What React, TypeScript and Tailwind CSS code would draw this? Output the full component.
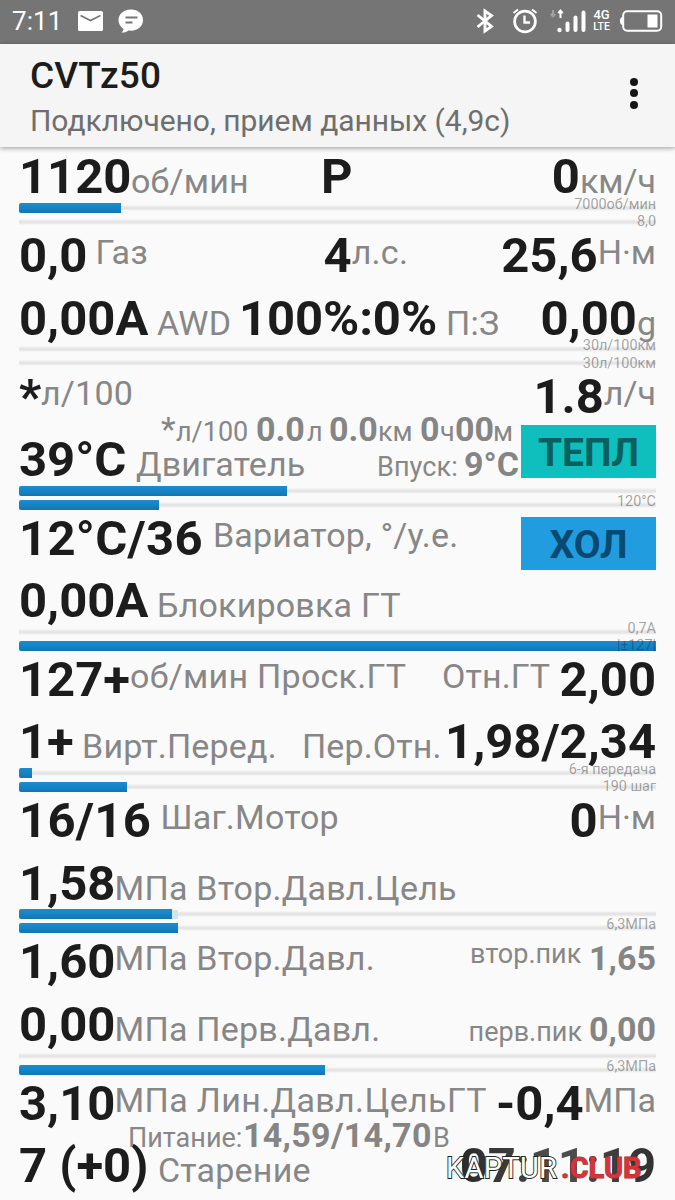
import type { ReactNode } from "react";

type TextProps = { children: ReactNode; className?: string };

const Value = ({ children, className = "" }: TextProps) => (
  <span className={`shrink-0 whitespace-pre text-[49px] leading-[50px] font-bold text-[#1c1c1c] ${className}`}>{children}</span>
);

const Label = ({ children, className = "" }: TextProps) => (
  <span className={`shrink-0 whitespace-pre text-[34px] leading-[42px] text-[#878787] ${className}`}>{children}</span>
);

const Small = ({ children, className = "" }: TextProps) => (
  <span className={`shrink-0 whitespace-pre text-[27px] text-[#878787] ${className}`}>{children}</span>
);

const SubValue = ({ children, className = "" }: TextProps) => (
  <span className={`shrink-0 whitespace-pre text-[34px] font-bold text-[#858585] ${className}`}>{children}</span>
);

const RowA = ({ children, short = false }: { children: ReactNode; short?: boolean }) => (
  <div className={`flex items-start ${short ? "h-[32.5px]" : "h-[62.5px]"}`}>{children}</div>
);

const RowB = ({ children }: { children: ReactNode }) => (
  <div className="flex h-[46.75px] items-baseline">{children}</div>
);

const SubRow = ({ children, className = "" }: TextProps) => (
  <div className={`flex h-[30px] items-baseline leading-[48px] ${className}`}>{children}</div>
);

const Bar = ({ width, ghost = 0 }: { width: number; ghost?: number }) => (
  <div className="flex h-[10px] items-center bg-[linear-gradient(to_bottom,transparent_2px,#efefef_3px,#e2e2e2_5px,#e6e6e6_6px,transparent_8px)]">
    <div className="h-[10px] rounded-l-[2px] bg-linear-to-b from-[#1c8ccd] via-[#1584c6] to-[#1674ad]" style={{ width }} />
    <div className="h-[9px] bg-[#cfe6f0]" style={{ width: ghost }} />
  </div>
);

function Bars({ widths, captions, ghost = 0 }: { widths: [number, number]; captions: string[]; ghost?: number }) {
  return (
    <div className="relative flex h-[32px] flex-col gap-[4px] pt-[4px]">
      <Bar width={widths[0]} ghost={ghost} />
      <Bar width={widths[1]} />
      <div
        className={`absolute right-0 flex flex-col items-end text-[14.4px] leading-[17.4px] text-[#282828]/42 ${
          captions.length === 1 ? "top-[11px]" : "-top-[3px]"
        }`}
      >
        {captions.map((c, i) => (
          <span key={i}>{c}</span>
        ))}
      </div>
    </div>
  );
}

function StatusBar() {
  return (
    <header className="flex h-[43.5px] items-center bg-[#757575] text-white">
      <span className="ml-[12px] w-[65px] text-[26px] leading-[43px] tracking-[0.1px]">7:11</span>
      <svg className="-mt-[2px] h-[22px] w-[26px]" viewBox="0 0 26 22">
        <rect x="1" y="1" width="25" height="20" rx="1.5" fill="#fff" />
        <path d="M3.5 5.5 13.5 10.5 23.5 5.5" fill="none" stroke="#757575" strokeWidth="1.6" />
      </svg>
      <svg className="-mt-[2px] ml-[15px] h-[26px] w-[26px]" viewBox="0 0 26 26">
        <path d="M13 1.5C6 1.5.5 6 .5 12c0 4 2 7 5 9-.2 1.4-1 2.5-2 3.5 3 .2 5.5-.7 7-2 9 1 14.5-4 14.5-10.5C25 6 20 1.5 13 1.5Z" fill="#fff" />
        <path d="M7.5 9.5h12M7.5 14.5h7" stroke="#757575" strokeWidth="1.8" />
      </svg>
      <svg className="-mt-[2px] ml-auto h-[26px] w-[20px]" viewBox="0 0 20 26">
        <path d="M2.5 7 16.5 18.5 10 23V3l6.5 4.500L2.5 19" fill="none" stroke="#fff" strokeWidth="2.900" />
      </svg>
      <svg className="-mt-[4px] ml-[17px] h-[28px] w-[26px]" viewBox="0 0 26 28" fill="none" stroke="#fff">
        <circle cx="13" cy="15.5" r="10.4" strokeWidth="2.7" />
        <path d="M12.5 9.5v7H18" strokeWidth="2.3" />
        <path d="M1.5 7 6 3.5M20 3.5l4.5 3.5" strokeWidth="2" />
      </svg>
      <svg className="-mt-[2px] ml-[12px] h-[26px] w-[38px]" viewBox="0 0 38 26">
        <path d="M3 2v7M.8 6 3 8.5 5.2 6" fill="none" stroke="#a0a0a0" strokeWidth="2" />
        <path d="M10.5 10V3M8.3 5.2 10.5 2.5 12.7 5.2" fill="none" stroke="#fff" strokeWidth="2" />
        <circle cx="9.5" cy="22" r="2.2" fill="#fff" />
        <path d="M17.5 15.5v6.5M25.5 9.5v12.5M33.5 4.5v17.5" stroke="#fff" strokeWidth="4" strokeLinecap="round" />
      </svg>
      <div className="-mt-[2px] ml-[4px] flex w-[19px] flex-col items-center text-[13px] leading-[12px] font-medium">
        <span>4G</span>
        <span className="text-[10.5px] leading-[12px]">LTE</span>
      </div>
      <svg className="-mt-[2px] mr-[12px] ml-[8px] h-[24px] w-[44px]" viewBox="0 0 44 24">
        <rect x="4.2" y="2.2" width="38" height="19.6" rx="4" fill="none" stroke="#fff" strokeWidth="2" />
        <path d="M4 8C1.5 8 1 10 1 12s.5 4 3 4Z" fill="#fff" />
        <rect x="28.5" y="5.5" width="10" height="13" fill="#fff" />
      </svg>
    </header>
  );
}

function AppBar() {
  return (
    <div className="flex h-[103px] items-start justify-between bg-[#f5f5f5] pr-[37px] pl-[30px] shadow-[0_1px_5px_rgba(0,0,0,0.4)]">
      <div className="flex flex-col whitespace-nowrap">
        <span className="mt-[10.5px] text-[37px] leading-[44px] font-medium tracking-[0.15px] text-[#1c1c1c]">CVTz50</span>
        <span className="mt-[3px] text-[30px] leading-[40px] tracking-[-0.03px] text-[#6e6e6e]">Подключено, прием данных (4,9с)</span>
      </div>
      <div className="mt-[34px] flex flex-col gap-[3.5px]">
        <i className="size-[8px] rounded-full bg-[#161616]" />
        <i className="size-[8px] rounded-full bg-[#161616]" />
        <i className="size-[8px] rounded-full bg-[#161616]" />
      </div>
    </div>
  );
}

export default function App() {
  return (
    <div className="flex h-[1200px] w-[675px] flex-col overflow-hidden bg-[#fafafa] font-['Roboto',sans-serif]">
      <StatusBar />
      <AppBar />
      <main className="flex flex-col pr-[19px] pl-[19px]">
        <div className="flex h-[52.5px] items-baseline pt-[5.5px]">
          <Value className="w-[112px]">1120</Value>
          <Label className="w-[190px] tracking-[0.2px]">об/мин</Label>
          <Value>P</Value>
          <Value className="ml-auto">0</Value>
          <Label>км/ч</Label>
        </div>

        <Bars widths={[102, 0]} captions={["7000об/мин", "8,0"]} />
        <RowA>
          <Value className="w-[76.5px]">0,0</Value>
          <Label className="w-[228px] tracking-[0.5px]">Газ</Label>
          <Value>4</Value>
          <Label className="tracking-[0.3px]">л.с.</Label>
          <Value className="ml-auto">25,6</Value>
          <Label>Н·м</Label>
        </RowA>
        <RowB>
          <Value className="w-[138px]">0,00A</Value>
          <Label className="w-[82px] tracking-[0.3px]">AWD</Label>
          <Value className="w-[207px] tracking-[-0.1px]">100%:0%</Value>
          <Label className="tracking-[0.2px]">П:З</Label>
          <Value className="ml-auto">0,00</Value>
          <Label>g</Label>
        </RowB>

        <Bars widths={[0, 0]} captions={["30л/100км", "30л/100км"]} />
        <RowA short>
          <Value className="w-[22px]">*</Value>
          <Label className="tracking-[0.2px]">л/100</Label>
          <Value className="ml-auto">1.8</Value>
          <Label>л/ч</Label>
        </RowA>
        <SubRow className="pl-[142px]">
          <SubValue className="w-[15px] font-normal">*</SubValue>
          <Small className="w-[80px]">л/100</Small>
          <SubValue className="w-[51px]">0.0</SubValue>
          <Small className="w-[22px]">л</Small>
          <SubValue className="w-[49px]">0.0</SubValue>
          <Small className="w-[42px]">км</Small>
          <SubValue className="w-[20px]">0</SubValue>
          <Small className="w-[15px]">ч</Small>
          <SubValue className="w-[38px]">00</SubValue>
          <Small>м</Small>
        </SubRow>
        <RowB>
          <Value className="w-[117px]">39°C</Value>
          <Label className="w-[241px] tracking-[0.1px]">Двигатель</Label>
          <Small className="w-[87px] tracking-[0.1px]">Впуск:</Small>
          <SubValue>9°C</SubValue>
          <span className="-mt-[10px] ml-auto h-[53px] w-[135px] shrink-0 self-start bg-[#0fbfbd] text-center text-[39px] leading-[57px] font-bold text-[#086160]">
            ТЕПЛ
          </span>
        </RowB>

        <Bars widths={[268, 140]} captions={["120°C"]} />
        <RowA>
          <Value className="w-[194px] tracking-[0.3px]">12°C/36</Value>
          <Label className="tracking-[0.15px]">Вариатор, °/у.е.</Label>
          <span className="mt-[3.5px] ml-auto h-[53px] w-[135px] shrink-0 bg-[#219ddf] text-center text-[39px] leading-[57px] font-bold text-[#0a4a70]">
            ХОЛ
          </span>
        </RowA>
        <RowB>
          <Value className="w-[138px]">0,00A</Value>
          <Label className="tracking-[0.2px]">Блокировка ГТ</Label>
        </RowB>

        <Bars widths={[0, 637]} captions={["0,7A", "|±127|"]} />
        <RowA>
          <Value className="w-[111px]">127+</Value>
          <Label className="w-[312px] tracking-[0.27px]">об/мин Проск.ГТ</Label>
          <Label className="tracking-[0.1px]">Отн.ГТ</Label>
          <Value className="ml-auto">2,00</Value>
        </RowA>
        <RowB>
          <Value className="w-[63px]">1+</Value>
          <Label className="w-[220px] tracking-[0.2px]">Вирт.Перед.</Label>
          <Label className="tracking-[0.1px]">Пер.Отн.</Label>
          <Value className="ml-auto">1,98/2,34</Value>
        </RowB>

        <Bars widths={[13, 108]} captions={["6-я передача", "190 шаг"]} />
        <RowA>
          <Value className="w-[141.5px] tracking-[0.3px]">16/16</Value>
          <Label className="tracking-[0.2px]">Шаг.Мотор</Label>
          <Value className="ml-auto">0</Value>
          <Label>Н·м</Label>
        </RowA>
        <RowB>
          <Value className="w-[95.5px]">1,58</Value>
          <Label className="tracking-[0.22px]">МПа Втор.Давл.Цель</Label>
        </RowB>

        <Bars widths={[153, 159]} ghost={6} captions={["6,3МПа"]} />
        <RowA>
          <Value className="w-[95.5px]">1,60</Value>
          <Label className="tracking-[0.22px]">МПа Втор.Давл.</Label>
          <Small className="ml-auto w-[119px] leading-[34px]">втор.пик</Small>
          <SubValue className="leading-[42px]">1,65</SubValue>
        </RowA>
        <RowB>
          <Value className="w-[95.5px]">0,00</Value>
          <Label className="tracking-[0.22px]">МПа Перв.Давл.</Label>
          <Small className="ml-auto w-[120.5px]">перв.пик</Small>
          <SubValue>0,00</SubValue>
        </RowB>

        <Bars widths={[0, 306]} captions={["6,3МПа"]} />
        <RowA short>
          <Value className="w-[95.5px]">3,10</Value>
          <Label className="tracking-[0.36px]">МПа Лин.Давл.ЦельГТ</Label>
          <Value className="ml-auto">-0,4</Value>
          <Label>МПа</Label>
        </RowA>
        <SubRow className="pl-[109px]">
          <Small className="w-[115px]">Питание:</Small>
          <SubValue className="w-[190px] tracking-[0.3px]">14,59/14,70</SubValue>
          <Small>В</Small>
        </SubRow>
        <div className="relative">
          <RowB>
            <Value className="w-[139px]">7 (+0)</Value>
            <Label className="tracking-[0.2px]">Старение</Label>
            <Value className="ml-auto bg-linear-to-r from-[#2a2a2a] via-[#505050] to-[#303030] bg-clip-text text-transparent">07:11:19</Value>
          </RowB>
          <div className="absolute top-[11px] left-[427px] flex text-[29px] leading-[32px] whitespace-nowrap">
            <span className="w-[115px] font-normal tracking-[0.3px] text-white [-webkit-text-stroke:1.8px_#222] [paint-order:stroke_fill]">KAPTUR</span>
            <span className="font-bold tracking-[0.1px] text-[#d2353a] [-webkit-text-stroke:1px_#a52a2e] [paint-order:stroke_fill]">.CLUB</span>
          </div>
        </div>
      </main>
    </div>
  );
}
